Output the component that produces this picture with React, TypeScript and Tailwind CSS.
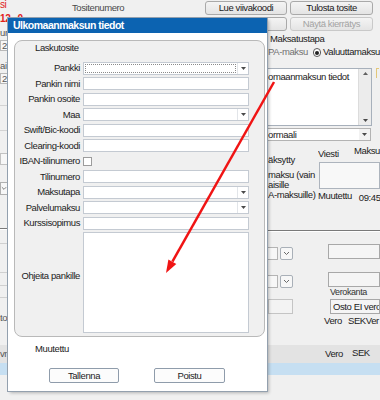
import React from "react";

const font = "font-['Liberation_Sans',Arial,sans-serif]";

function DownTriangle() {
  return (
    <svg width="5" height="3" viewBox="0 0 5 3">
      <polygon points="0,0 5,0 2.5,3" fill="#4a4a4a" />
    </svg>
  );
}

function Chevron() {
  return (
    <svg width="7" height="5" viewBox="0 0 7 5">
      <polyline points="1,1 3.5,3.5 6,1" fill="none" stroke="#6a6a6a" strokeWidth="1" />
    </svg>
  );
}

function TopButton({ label, disabled }: { label?: string; disabled?: boolean }) {
  return (
    <div
      className={`h-[14px] flex items-center justify-center rounded-[3px] border bg-gradient-to-b from-[#f4f4f4] to-[#e4e4e4] text-[9.5px] tracking-[-0.4px] leading-none ${
        disabled ? "border-[#c9c9c9] text-[#a3a3a3]" : "border-[#a9a9a9] text-[#1a1a1a]"
      }`}
    >
      {label}
    </div>
  );
}

interface IFieldRowProps {
  label: string;
  kind?: "text" | "combo" | "check" | "focus";
}

function FieldRow({ label, kind = "text" }: IFieldRowProps) {
  return (
    <div className="flex items-center h-[15.5px]">
      <div className="w-[68px] pr-[3px] text-right whitespace-nowrap">{label}</div>
      {kind === "check" ? (
        <div className="w-[9px] h-[9px] border border-[#9c9c9c] bg-white" />
      ) : (
        <div className="w-[166px] h-[13px] border border-[#c4cad2] bg-white flex">
          <div className="flex-1 relative">
            {kind === "focus" && (
              <div className="absolute inset-[1px] border border-dotted border-[#8a8a8a]" />
            )}
          </div>
          {(kind === "combo" || kind === "focus") && (
            <div className="w-[11px] flex items-center justify-center border-l border-[#e2e5e9]">
              <DownTriangle />
            </div>
          )}
        </div>
      )}
    </div>
  );
}

function SmallCombo() {
  return (
    <div className="flex items-center mt-[3px]">
      <div className="w-[10px] h-[13px] border-y border-r border-[#b4b4b4] bg-[#f7f7f7]" />
      <div className="ml-[2px] w-[13px] h-[13px] rounded-[2px] border border-[#a9b0b8] bg-[#f7f7f7] flex items-center justify-center">
        <Chevron />
      </div>
    </div>
  );
}

function Dialog() {
  return (
    <div className="absolute left-[8px] top-[18px] w-[259px] h-[373px] bg-white flex flex-col shadow-[0_0_0_1px_#93a0ae,2px_2px_3px_rgba(0,0,0,0.25)] text-[9.5px] tracking-[-0.4px] text-[#1c1c1c]">
      <div className="h-[15px] bg-[#0c63b1] flex items-center pl-[5px] text-white font-bold text-[10.5px] tracking-[-0.5px]">
        Ulkomaanmaksun tiedot
      </div>

      <div className="mt-[7px] ml-[6px] w-[251px] h-[297px] rounded-[8px] border border-[#b9b9b9] bg-[#f0f0f0] flex flex-col">
        <div className="h-[14px] flex items-center pl-[20px]">Laskutosite</div>
        <div className="mt-[5.5px] flex flex-col">
          <FieldRow label="Pankki" kind="focus" />
          <FieldRow label="Pankin nimi" />
          <FieldRow label="Pankin osoite" />
          <FieldRow label="Maa" kind="combo" />
          <FieldRow label="Swift/Bic-koodi" />
          <FieldRow label="Clearing-koodi" />
          <FieldRow label="IBAN-tilinumero" kind="check" />
          <FieldRow label="Tilinumero" />
          <FieldRow label="Maksutapa" kind="combo" />
          <FieldRow label="Palvelumaksu" kind="combo" />
          <FieldRow label="Kurssisopimus" />
        </div>
        <div className="mt-[1px] flex items-start">
          <div className="w-[68px] pr-[3px] mt-[38px] text-right whitespace-nowrap leading-[11px]">
            Ohjeita pankille
          </div>
          <div className="w-[166px] h-[101px] border border-[#c4cad2] bg-white" />
        </div>
      </div>

      <div className="mt-[6px] ml-[27px] leading-[11px]">Muutettu</div>

      <div className="mt-[14px] flex">
        <button className="ml-[41px] w-[70px] h-[15px] rounded-[2px] border border-[#8f9cab] bg-[#fcfcfc] flex items-center justify-center leading-none">
          Tallenna
        </button>
        <button className="ml-[35px] w-[71px] h-[15px] rounded-[2px] border border-[#8f9cab] bg-[#fcfcfc] flex items-center justify-center leading-none">
          Poistu
        </button>
      </div>
    </div>
  );
}

function App() {
  return (
    <div
      className={`relative w-[380px] h-[400px] overflow-hidden bg-[#f0f0f0] ${font} text-[9.5px] tracking-[-0.4px] text-[#222]`}
    >
      <div className="flex h-[345px]">
        {/* left part, mostly under the dialog */}
        <div className="w-[205px] flex flex-col">
          <div className="flex h-[24px]">
            <div className="w-[30px] flex flex-col text-[#e0201b] text-[10px]">
              <span className="-mt-[1px] leading-[11px]">si</span>
              <span className="mt-[3px] leading-[11px] font-bold whitespace-nowrap">12 . 0</span>
            </div>
            <div className="ml-[42px] flex flex-col text-[#4a4a4a]">
              <span className="mt-[2px] leading-[11px]">Tositenumero</span>
              <span className="mt-[2px] leading-[11px]">5044000004</span>
            </div>
          </div>
          <div className="w-[8px] overflow-hidden flex flex-col text-[#555]">
            <span className="mt-[4px] leading-[10px] whitespace-nowrap">un</span>
            <div className="mt-[2px] h-[11px] border border-[#b9b9b9] bg-[#f7f7f7] pl-[1px] leading-[9px]">2.</div>
            <span className="mt-[10px] leading-[10px] whitespace-nowrap">ai</span>
            <div className="mt-[2px] h-[11px] border border-[#b9b9b9] bg-[#f7f7f7] pl-[1px] leading-[9px]">2.</div>
            <div className="mt-[21px] h-px bg-[#d3d3d3]" />
            <div className="mt-[24px] h-px bg-[#d3d3d3]" />
            <div className="mt-[22px] h-[12px] border border-[#c2c2c2] bg-[#f7f7f7]" />
            <div className="mt-[17px] h-[13px] border border-[#b0b0b0] bg-[#f7f7f7] flex items-center">
              <Chevron />
            </div>
            <div className="mt-[33px] h-px bg-[#7a7a7a]" />
            <div className="h-px bg-white" />
            <div className="mt-[13px] h-px bg-[#d0d0d0]" />
            <div className="mt-[28px] h-px bg-[#d0d0d0]" />
            <div className="mt-[12px] h-px bg-[#d0d0d0]" />
            <div className="mt-[11px] h-px bg-[#d0d0d0]" />
            <span className="mt-[15px] leading-[10px] whitespace-nowrap">tor</span>
          </div>
        </div>

        {/* right part of the form */}
        <div className="w-[175px] flex flex-col">
          <div className="grid grid-cols-[82px_83px] gap-x-[3px] gap-y-[2px] pt-[1px]">
            <TopButton label="Lue viivakoodi" />
            <TopButton label="Tulosta tosite" />
            <TopButton />
            <TopButton label="Näytä kierrätys" disabled />
          </div>

          <div className="ml-[63px] w-[112px] flex flex-col">
            <div className="mt-[2px] h-[11px] leading-[11px] pl-[2px]">Maksatustapa</div>
            <div className="mt-[3px] h-[11px] flex items-center whitespace-nowrap">
              <span className="w-[50px] text-[#707070]">PA-maksu</span>
              <span className="w-[9px] h-[9px] rounded-full border border-[#5a5a5a] bg-white flex items-center justify-center">
                <span className="w-[4px] h-[4px] rounded-full bg-[#222]" />
              </span>
              <span className="ml-[2px]">Valuuttamaksu</span>
            </div>

            <div className="mt-[10px] flex items-start">
              <div className="w-[104px] h-[58px] border-y border-r border-[#a7b0bb] bg-white flex">
                <div className="flex-1 pt-[2px] leading-[11px] whitespace-nowrap overflow-hidden">
                  omaanmaksun tiedot
                </div>
                <div className="w-[13px] bg-[#ececec] border-l border-[#dcdcdc] flex flex-col justify-between items-center py-[3px]">
                  <svg width="5" height="3" viewBox="0 0 5 3">
                    <polygon points="0,3 5,3 2.5,0" fill="#606060" />
                  </svg>
                  <DownTriangle />
                </div>
              </div>
              <div className="ml-[4px] w-[3px] h-[10px] border-l border-t border-[#e2c77a]" />
            </div>

            <div className="mt-[2px] w-[103px] h-[13px] border-y border-r border-[#b3b3b3] bg-white flex">
              <div className="flex-1 leading-[11px] whitespace-nowrap overflow-hidden">ormaali</div>
              <div className="w-[11px] flex items-center justify-center bg-[#f2f2f2]">
                <DownTriangle />
              </div>
            </div>

            <div className="mt-[3px] flex">
              <div className="w-[50px] flex flex-col whitespace-nowrap">
                <span className="mt-[9.5px] leading-[11px]">äksytty</span>
                <span className="mt-[5px] leading-[10px]">maksu (vain</span>
                <span className="leading-[10px]">aisille</span>
                <span className="leading-[10px]">A-maksuille)</span>
              </div>
              <div className="w-[62px] flex flex-col whitespace-nowrap overflow-hidden">
                <div className="flex items-start">
                  <span className="mt-[4px] w-[40px] leading-[11px]">Viesti</span>
                  <span className="mt-[0.5px] leading-[11px]">Maksu</span>
                </div>
                <div className="mt-[3px] ml-[1px] h-[27px] border border-[#adb4bd] bg-[#f8f8f8]" />
                <div className="flex items-start">
                  <span className="mt-[1px] leading-[11px]">Muutettu</span>
                  <span className="ml-[7px] mt-[2.5px] leading-[11px]">09:45</span>
                </div>
              </div>
            </div>

            <div className="mt-[27px] h-px bg-[#7a7a7a]" />
            <div className="h-px bg-white" />

            <div className="mt-[12px] flex items-start h-[16px]">
              <SmallCombo />
              <div className="ml-[35px] w-[52px] h-[15px] border border-[#a8a8a8] bg-[#f5f5f5]" />
            </div>
            <div className="mt-[12px] flex items-start h-[16px]">
              <SmallCombo />
              <div className="ml-[35px] w-[52px] h-[15px] border border-[#a8a8a8] bg-[#f5f5f5]" />
            </div>
            <div className="-mt-[1px] ml-[62px] leading-[10px] text-[9px] text-[#333]">Verokanta</div>
            <div className="mt-[2px] flex">
              <div className="w-[25px] h-[15px] border border-[#c4c4c4] bg-[#f3f3f3]" />
              <div className="ml-[37px] w-[50px] h-[15px] border border-[#a8a8a8] bg-[#f5f5f5] pl-[2px] leading-[13px] whitespace-nowrap overflow-hidden">
                Osto EI vero
              </div>
            </div>
            <div className="mt-[1px] ml-[56px] flex leading-[11px] whitespace-nowrap">
              <span>Vero</span>
              <span className="ml-[6px]">SEKVer</span>
            </div>
          </div>
        </div>
      </div>

      <div className="h-[18px] bg-[#e3e3e3] flex items-center">
        <span className="w-[8px] overflow-hidden text-[#555]">vm</span>
        <span className="ml-[317px]">Vero</span>
        <span className="ml-[9px] -mt-[2px]">SEK</span>
      </div>
      <div className="h-[12px] bg-[#c6dff2]" />

      <Dialog />

      <svg
        className="absolute inset-0 pointer-events-none"
        width="380"
        height="400"
        viewBox="0 0 380 400"
      >
        <line x1="274" y1="82" x2="172.4" y2="261.7" stroke="#f01414" strokeWidth="2.5" />
        <polygon points="166,273 176.3,263.9 168.4,259.5" fill="#f01414" />
      </svg>
    </div>
  );
}

export default App;
